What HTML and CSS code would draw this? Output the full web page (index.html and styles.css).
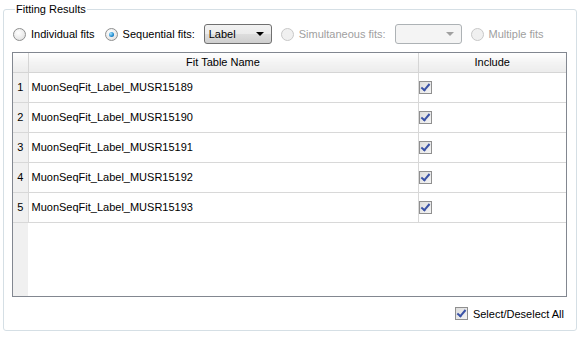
FILE: index.html
```html
<!DOCTYPE html>
<html lang="en">
<head>
    <meta charset="UTF-8">
    <title>Fitting Results</title>
    <link rel="stylesheet" href="styles.css">
</head>
<body>
    <fieldset class="group">
        <legend>Fitting Results</legend>

        <div class="options">
            <label class="radio"><span class="dot"></span>Individual fits</label>
            <label class="radio"><span class="dot checked"></span>Sequential fits:</label>
            <div class="combo">
                <span>Label</span>
                <span class="arrow"></span>
            </div>
            <label class="radio disabled"><span class="dot"></span>Simultaneous fits:</label>
            <div class="combo disabled">
                <span></span>
                <span class="arrow"></span>
            </div>
            <label class="radio disabled"><span class="dot"></span>Multiple fits</label>
        </div>

        <div class="table-wrap">
            <table class="fits">
                <thead>
                    <tr>
                        <th class="corner"></th>
                        <th class="name-col">Fit Table Name</th>
                        <th>Include</th>
                    </tr>
                </thead>
                <tbody>
                    <tr><td class="num">1</td><td>MuonSeqFit_Label_MUSR15189</td><td><span class="check"></span></td></tr>
                    <tr><td class="num">2</td><td>MuonSeqFit_Label_MUSR15190</td><td><span class="check"></span></td></tr>
                    <tr><td class="num">3</td><td>MuonSeqFit_Label_MUSR15191</td><td><span class="check"></span></td></tr>
                    <tr><td class="num">4</td><td>MuonSeqFit_Label_MUSR15192</td><td><span class="check"></span></td></tr>
                    <tr><td class="num">5</td><td>MuonSeqFit_Label_MUSR15193</td><td><span class="check"></span></td></tr>
                </tbody>
            </table>
        </div>

        <div class="footer">
            <label class="select-all"><span class="check"></span>Select/Deselect All</label>
        </div>
    </fieldset>
</body>
</html>
```

FILE: styles.css
```css
* {
    box-sizing: border-box;
}

body {
    margin: 0;
    padding: 2px 4px 0 3px;
    background: #ffffff;
    font-family: "Liberation Sans", Arial, sans-serif;
    font-size: 11px;
    color: #000;
    white-space: nowrap;
}

.group {
    margin: 0;
    width: 574px;
    height: 329px;
    padding: 0 9px 0 8px;
    border: 1px solid #d5dfe5;
    border-radius: 3px;
    display: flex;
    flex-direction: column;
}

.group legend {
    padding: 0 1px;
    margin-left: 3px;
    line-height: 14px;
}

.options {
    display: flex;
    align-items: center;
    height: 22px;
    margin-top: 7px;
}

.radio {
    display: flex;
    align-items: center;
    margin-right: 9px;
}

.dot {
    width: 13px;
    height: 13px;
    border-radius: 50%;
    border: 1px solid #8e8f8f;
    background: radial-gradient(circle at 40% 35%, #ffffff 0%, #e6e6e6 70%, #cfcfcf 100%);
    margin: 0 5px 0 1px;
    position: relative;
}

.dot.checked::after {
    content: "";
    position: absolute;
    left: 3px;
    top: 3px;
    width: 5px;
    height: 5px;
    border-radius: 50%;
    background: radial-gradient(circle at 35% 35%, #a8e4ff 0%, #1d8bd0 60%, #0b4a8c 100%);
}

.radio.disabled {
    color: #a0a0a0;
}

.radio.disabled .dot {
    border-color: #c8c8c8;
    background: #f0f0f0;
}

.combo {
    width: 68px;
    height: 20px;
    border: 1px solid #707070;
    border-radius: 3px;
    background: linear-gradient(#f2f2f2, #ebebeb 50%, #dddddd 51%, #cfcfcf);
    display: flex;
    align-items: center;
    justify-content: space-between;
    padding: 0 7px 0 4px;
    margin-right: 8px;
}

.combo.disabled {
    width: 67px;
    border-color: #adb2b5;
    background: #f4f4f4;
}

.arrow {
    width: 0;
    height: 0;
    border-left: 4px solid transparent;
    border-right: 4px solid transparent;
    border-top: 4px solid #000;
}

.combo.disabled .arrow {
    border-top-color: #a0a0a0;
}

.table-wrap {
    margin-top: 7px;
    height: 245px;
    border: 1px solid #828790;
    background: linear-gradient(to right, #f0f0f0 15px, #ffffff 15px);
}

.fits {
    width: 100%;
    border-collapse: collapse;
}

.fits th {
    height: 19px;
    font-weight: normal;
    text-align: center;
    background: linear-gradient(#ffffff, #f3f3f3 50%, #ececec);
    border-right: 1px solid #d5d5d5;
    border-bottom: 1px solid #d5d5d5;
    padding: 0;
}

.fits th.corner {
    width: 15px;
}

.fits th.name-col {
    width: 390px;
}

.fits th:last-child {
    border-right: none;
}

.fits td {
    height: 30px;
    padding: 0 3px;
    border-right: 1px solid #d8d8d8;
    border-bottom: 1px solid #d8d8d8;
    background: #ffffff;
}

.fits td:last-child {
    border-right: none;
    padding: 0;
}

.fits td.num {
    background: #f0f0f0;
    padding: 0;
    text-align: center;
}

.check {
    display: inline-block;
    width: 13px;
    height: 13px;
    border: 1px solid #8f8f8f;
    background: linear-gradient(135deg, #dcdcdc, #f4f4f4);
    position: relative;
    vertical-align: middle;
}

.check::after {
    content: "";
    position: absolute;
    left: 3px;
    top: 0px;
    width: 3px;
    height: 7px;
    border-right: 2px solid #3a52a6;
    border-bottom: 2px solid #3a52a6;
    transform: rotate(40deg);
}

.footer {
    display: flex;
    justify-content: flex-end;
    margin-top: 10px;
}

.select-all {
    display: flex;
    align-items: center;
    margin-right: 3px;
}

.select-all .check {
    margin-right: 5px;
}
```
